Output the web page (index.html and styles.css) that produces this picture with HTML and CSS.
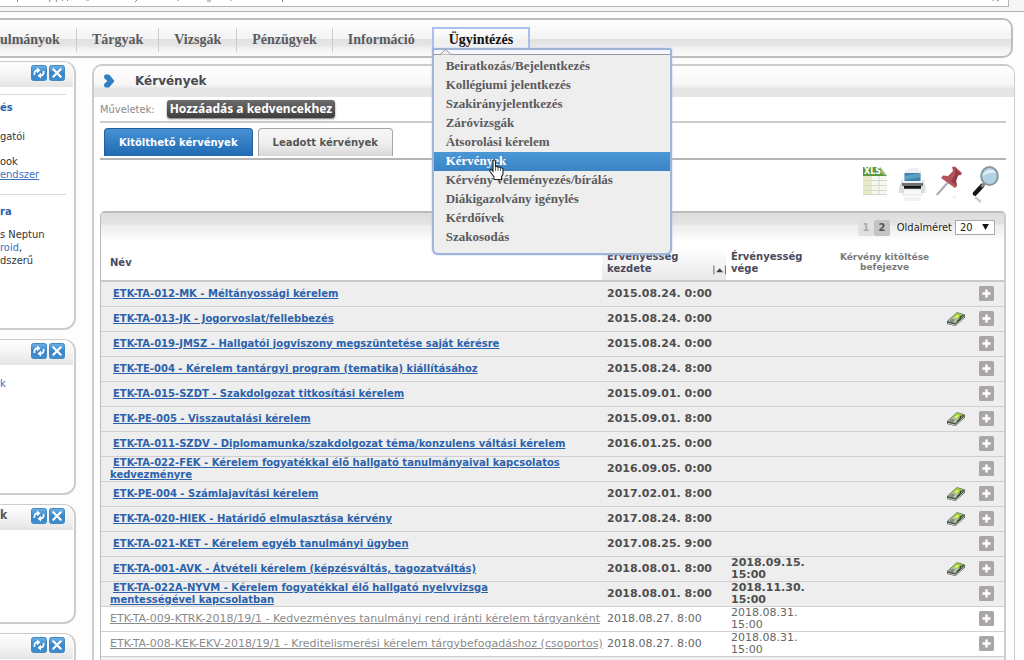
FILE: index.html
```html
<!DOCTYPE html>
<html lang="hu">
<head>
<meta charset="utf-8">
<title>Kérvények</title>
<link rel="stylesheet" href="styles.css">
</head>
<body>
<svg class="defs" aria-hidden="true">
  <defs>
    <linearGradient id="blue" x1="0" y1="0" x2="0" y2="1"><stop offset="0" stop-color="#6fb3e6"/><stop offset=".5" stop-color="#3786ca"/><stop offset="1" stop-color="#3f8ed0"/></linearGradient>
    <symbol id="i-refresh" viewBox="0 0 16 16"><rect x=".5" y=".5" width="15" height="15" rx="2" fill="url(#blue)" stroke="#4488c0"/><path d="M3.500 10C3 7.500 4 5.500 6.500 5.300M12.500 6c.5 2.500-.5 4.500-3 4.700" fill="none" stroke="#fff" stroke-width="1.900"/><path d="M6 2.500L9.500 5.300 6 8.500zM10 7.500L6.500 10.700 10 13.500z" fill="#fff"/></symbol>
    <symbol id="i-close" viewBox="0 0 16 16"><rect x=".5" y=".5" width="15" height="15" rx="2" fill="url(#blue)" stroke="#4488c0"/><path d="M4.300 4.300l7.400 7.400M11.700 4.300l-7.400 7.400" stroke="#fff" stroke-width="2.200" stroke-linecap="round"/></symbol>
    <symbol id="i-plus" viewBox="0 0 15 15"><rect width="15" height="15" rx="1.500" fill="#aaa6a8"/><path d="M7.500 3.500v8M3.500 7.500h8" stroke="#fff" stroke-width="2.400"/></symbol>
    <symbol id="i-money" viewBox="0 0 20 16"><path d="M1 11L11 2l8 2.500v2L9.500 15 1 13z" fill="#3c423c"/><path d="M1.500 12.300L9.500 14 18.500 5.800" stroke="#dfe3da" stroke-width=".9" fill="none"/><path d="M1 10.500L11 1.500l8 2.500-9.500 8.400z" fill="#b3bfa8" stroke="#4d564a" stroke-width=".7"/><path d="M6.500 6l4.500-4 5 1.500-4.500 4.500z" fill="#9fd02e"/><path d="M8.500 6l3-2 1.500 1-3 2z" fill="#f2f6a4"/><path d="M3 10.300l3-2.500 3 1-2.500 2.500z" fill="#7c8a76"/><path d="M11 10.800l3-2.800.5-2.500 3-1" stroke="#2f4a28" stroke-width="1.300" fill="none"/></symbol>
  </defs>
</svg>

<div class="browser-bar">
  <div class="address">
    <svg width="1000" height="4" viewBox="0 0 1000 4" aria-hidden="true"><path d="M17.500 0v2M50 0l-1 2M57 0l-1 2M63 0l-1 1M68 0l-1 1M86 0h3M137 0l-2 2M178 0v1M207 1h4M231 0v1M282.500 0v2M992 0h2M999 0l-2 1" stroke="#888" fill="none"/></svg>
  </div>
</div>

<nav class="main-nav">
  <a href="#" class="nav-item first">ulmányok</a>
  <a href="#" class="nav-item">Tárgyak</a>
  <a href="#" class="nav-item">Vizsgák</a>
  <a href="#" class="nav-item">Pénzügyek</a>
  <a href="#" class="nav-item last">Információ</a>
  <div class="nav-open">
    <a href="#" class="nav-item active">Ügyintézés</a>
    <div class="menu">
      <svg class="notch" width="12" height="6" viewBox="0 0 12 6" aria-hidden="true"><path d="M0 5.500L5.500.500 11 5.500" fill="#eee" stroke="#999"/></svg>
      <a href="#">Beiratkozás/Bejelentkezés</a>
      <a href="#">Kollégiumi jelentkezés</a>
      <a href="#">Szakirányjelentkezés</a>
      <a href="#">Záróvizsgák</a>
      <a href="#">Átsorolási kérelem</a>
      <a href="#" class="hover">Kérvények</a>
      <a href="#">Kérvény véleményezés/bírálás</a>
      <a href="#">Diákigazolvány igénylés</a>
      <a href="#">Kérdőívek</a>
      <a href="#">Szakosodás</a>
      <svg class="cursor" width="18" height="22" viewBox="0 0 18 22" aria-hidden="true"><path d="M5 1.500c1-1 2.500-.5 2.500 1V8c.5-1 2.300-.8 2.500.300 1-.8 2.200-.3 2.500.7 1-.5 2.500 0 2.500 1.500V15l-1.500 3v2.500H6V18l-4-5.500c-.8-1.500.8-2.500 2-1.300L5 12.300z" fill="#fff" stroke="#222" stroke-width="1.100"/><path d="M7.500 8v4M10 8.500V12M12.500 9.500V12" stroke="#444" stroke-width=".8"/></svg>
    </div>
  </div>
</nav>

<div class="columns">
  <aside class="sidebar">
    <section class="box box-news">
      <header class="box-head"><span></span>
        <button aria-label="Frissítés"><svg><use href="#i-refresh"/></svg></button><button aria-label="Bezárás"><svg><use href="#i-close"/></svg></button></header>
      <div class="news">
        <h3>és</h3>
        <p>gatói</p>
        <p>ook<br><a href="#" class="u">endszer</a></p>
      </div>
      <div class="news">
        <h3>ra</h3>
        <p>s Neptun<br><a href="#">roid</a>,<br>dszerű</p>
      </div>
    </section>
    <section class="box box-links">
      <header class="box-head"><span></span>
        <button aria-label="Frissítés"><svg><use href="#i-refresh"/></svg></button><button aria-label="Bezárás"><svg><use href="#i-close"/></svg></button></header>
      <p><a href="#">k</a></p>
    </section>
    <section class="box box-msgs">
      <header class="box-head"><span>k</span>
        <button aria-label="Frissítés"><svg><use href="#i-refresh"/></svg></button><button aria-label="Bezárás"><svg><use href="#i-close"/></svg></button></header>
    </section>
    <section class="box box-msgs">
      <header class="box-head"><span></span>
        <button aria-label="Frissítés"><svg><use href="#i-refresh"/></svg></button><button aria-label="Bezárás"><svg><use href="#i-close"/></svg></button></header>
    </section>
  </aside>

  <main class="panel">
    <header class="panel-head">
      <svg width="12" height="14" viewBox="0 0 12 14" aria-hidden="true"><path d="M2 1h4l5 6-5 6H2l-.5-3L5 7 1.500 4z" fill="#2f7fc0" stroke="#2f7fc0" stroke-linejoin="round"/></svg>
      <h1>Kérvények</h1>
    </header>
    <div class="panel-body">
      <div class="actions"><span>Műveletek:</span><button>Hozzáadás a kedvencekhez</button></div>
      <div class="tabs"><button class="tab on">Kitölthető kérvények</button><button class="tab">Leadott kérvények</button></div>
      <div class="tools">
        <button aria-label="Excel"><svg viewBox="0 0 28 38"><path d="M2 2h17l7 9v19H2z" fill="#f7f8f1"/><path d="M2 11h8v19H2z" fill="#e9e9c2"/><path d="M2 15.500h24M2 20.500h24M2 25.500h24M10 11v19M18 11v19M2 29.500h24" stroke="#d5dac6" fill="none"/><path d="M2 2h17l7 9H2z" fill="#5c9841"/><path d="M19 2l7 9-5-2z" fill="#9cc486"/><text x="3" y="9" class="xls">XLS</text></svg></button>
        <button aria-label="Nyomtatás"><svg viewBox="0 0 28 38"><path d="M7 5h3V3h11v3h2v12H6z" fill="#eef0f2"/><rect x="6.500" y="8" width="16" height="8" fill="#3b84ad"/><path d="M7 11l15-3v4l-15 3z" fill="#5aa1c6"/><path d="M3 16l2-2v4h19v-4l2 2 1.500 6v6H1v-6z" fill="#dcdfe1"/><path d="M4 18h21v3H4z" fill="#6c7174"/><rect x="6" y="21" width="17" height="3" fill="#141414"/><path d="M6 24h17l1 6H5z" fill="#f8f8f8" stroke="#ccc" stroke-width=".6"/><path d="M6 32h17l-1 4H7z" fill="#f1f1f1"/></svg></button>
        <button aria-label="Kitűzés"><svg viewBox="0 0 28 38"><path d="M12 18L1.500 30" stroke="#b8bfc6" stroke-width="2"/><path d="M13 18L3 29.500" stroke="#737c85" stroke-width=".7"/><path d="M17 2l3-.5 7 6.500-1 2-3 .5-2 5.500 1 5-2 2L6 13l2-2.500 5 .5 5-5z" fill="#b5535a"/><path d="M20 3l6 6-3 1.500-2 5.500 1 5-6-5 4-6z" fill="#923c44"/><path d="M17 32l3-2 1 4z" fill="#f8e8e8"/></svg></button>
        <button aria-label="Keresés"><svg viewBox="0 0 28 38"><path d="M10 21L3 28.500" stroke="#161616" stroke-width="4.500" stroke-linecap="round"/><path d="M12.500 18.500L9.500 22" stroke="#888" stroke-width="3"/><ellipse cx="17.500" cy="11" rx="8.300" ry="9" fill="#b4d2e3" stroke="#8798a3" stroke-width="2"/><path d="M10.500 11c1-6 11-9 13.500-3-5-1-9 0-13.500 3z" fill="#e2f1f8"/><path d="M3 32l6 5" stroke="#ccc" stroke-width="2.500"/></svg></button>
      </div>

      <div class="grid">
        <div class="pager">
          <button disabled>1</button><button class="cur">2</button>
          <label for="size">Oldalméret</label>
          <div class="select-wrap"><select id="size"><option>20</option></select><svg width="9" height="8" viewBox="0 0 9 8" aria-hidden="true"><path d="M0 0h9L4.500 8z" fill="#111"/></svg></div>
        </div>
        <table>
          <colgroup><col><col class="c-start"><col class="c-end"><col class="c-done"><col class="c-money"><col class="c-plus"></colgroup>
          <thead><tr>
            <th>Név</th>
            <th class="sorted"><div class="sort"><span>Érvényesség kezdete</span><svg width="15" height="10" viewBox="0 0 15 10" aria-hidden="true"><path d="M1 0v10M14 0v10" stroke="#555"/><path d="M3.500 7.500h8L7.500 3z" fill="#444"/></svg></div></th>
            <th>Érvényesség vége</th>
            <th class="done">Kérvény kitöltése befejezve</th><th></th><th></th>
          </tr></thead>
          <tbody id="rows"></tbody>
        </table>
      </div>
    </div>
  </main>
</div>
<script src="rows.js"></script>
</body>
</html>
```
FILE: rows.js
```js
const rows = [
  ["ETK-TA-012-MK - Méltányossági kérelem", "2015.08.24. 0:00", "", 0, 1],
  ["ETK-TA-013-JK - Jogorvoslat/fellebbezés", "2015.08.24. 0:00", "", 1, 1],
  ["ETK-TA-019-JMSZ - Hallgatói jogviszony megszüntetése saját kérésre", "2015.08.24. 0:00", "", 0, 1],
  ["ETK-TE-004 - Kérelem tantárgyi program (tematika) kiállításához", "2015.08.24. 8:00", "", 0, 1],
  ["ETK-TA-015-SZDT - Szakdolgozat titkosítási kérelem", "2015.09.01. 0:00", "", 0, 1],
  ["ETK-PE-005 - Visszautalási kérelem", "2015.09.01. 8:00", "", 1, 1],
  ["ETK-TA-011-SZDV - Diplomamunka/szakdolgozat téma/konzulens váltási kérelem", "2016.01.25. 0:00", "", 0, 1],
  ["ETK-TA-022-FEK - Kérelem fogyatékkal élő hallgató tanulmányaival kapcsolatos kedvezményre", "2016.09.05. 0:00", "", 0, 1],
  ["ETK-PE-004 - Számlajavítási kérelem", "2017.02.01. 8:00", "", 1, 1],
  ["ETK-TA-020-HIEK - Határidő elmulasztása kérvény", "2017.08.24. 8:00", "", 1, 1],
  ["ETK-TA-021-KET - Kérelem egyéb tanulmányi ügyben", "2017.08.25. 9:00", "", 0, 1],
  ["ETK-TA-001-AVK - Átvételi kérelem (képzésváltás, tagozatváltás)", "2018.08.01. 8:00", "2018.09.15. 15:00", 1, 1],
  ["ETK-TA-022A-NYVM - Kérelem fogyatékkal élő hallgató nyelvvizsga mentességével kapcsolatban", "2018.08.01. 8:00", "2018.11.30. 15:00", 0, 1],
  ["ETK-TA-009-KTRK-2018/19/1 - Kedvezményes tanulmányi rend iránti kérelem tárgyanként", "2018.08.27. 8:00", "2018.08.31. 15:00", 0, 0],
  ["ETK-TA-008-KEK-EKV-2018/19/1 - Kreditelismerési kérelem tárgybefogadáshoz (csoportos)", "2018.08.27. 8:00", "2018.08.31. 15:00", 0, 0]
];
document.getElementById("rows").innerHTML = rows.map(([name, start, end, money, open]) =>
  `<tr class="${open ? "open" : "closed"}"><td><a href="#">${name}</a></td><td>${start}</td><td>${end}</td><td></td>` +
  `<td class="ic">${money ? '<svg class="money" aria-hidden="true"><use href="#i-money"/></svg>' : ""}</td>` +
  `<td class="ic"><button aria-label="Lehetőségek"><svg class="plus"><use href="#i-plus"/></svg></button></td></tr>`).join("");
```
FILE: styles.css
```css
* { box-sizing: border-box; }
body { display: flex; flex-direction: column; height: 100vh; margin: 0; background: #fdfdfd; overflow: hidden; font-family: "DejaVu Sans", sans-serif; font-size: 10px; color: #333; }
button { border: 0; padding: 0; background: none; font: inherit; color: inherit; }
h1, h3, p { margin: 0; }
a { color: #3a6fc0; text-decoration: none; }
svg { display: block; }
.defs { position: absolute; width: 0; height: 0; }

.browser-bar { flex: none; height: 12px; background: #f6f6f6; border-bottom: 1px solid #b5b5b5; padding-right: 15px; }
.address { height: 7px; background: #fff; border: 1px solid #b5b5b5; border-width: 0 1px 1px 0; overflow: hidden; }

.main-nav { flex: none; display: flex; margin: 6px 11px 0 0; padding-top: 8px; height: 40px; border: 2px solid #bebebe; border-left: 0; border-radius: 0 10px 10px 0; background: linear-gradient(#fff 0, #f3f3f3 52%, #e1e1e1 54%, #e6e6e6 70%, #f3f3f3 80%, #fafafa); }
.nav-item { display: block; height: 24px; padding: 0 15px; line-height: 24px; border-right: 1px solid #ccc; font-family: "Liberation Serif", serif; font-size: 14px; font-weight: bold; color: #5a5a5c; white-space: nowrap; }
.nav-item.first { padding: 0 16px 0 0; }
.nav-item.last { border-right: 0; padding-right: 17px; }
.nav-open { position: relative; }
.nav-item.active { height: 22px; margin-top: -1px; border: 2px solid #a9c0ef; border-bottom: 0; color: #111; background: linear-gradient(#fff, #eee 70%, #f6f6f6); line-height: 22px; }
.menu { position: absolute; z-index: 5; left: 0; top: 20px; width: 240px; padding: 7px 0 6px; border: 2px solid #9fb4d6; border-radius: 0 3px 6px 6px; background: #eee; box-shadow: 0 0 2px #a9c0ef; }
.menu::before { content: ""; position: absolute; left: 0; right: 0; top: 0; height: 4px; border-bottom: 1px solid #999; background: #f4f7ff; }
.menu .notch { position: absolute; left: 6px; top: -1px; }
.menu a { display: block; height: 19px; padding-left: 12px; line-height: 18px; font-family: "Liberation Serif", serif; font-size: 13px; font-weight: bold; color: #5a5a5c; }
.menu a.hover { background: linear-gradient(#4b98d6, #3b84c4); color: #fff; }
.menu .cursor { position: absolute; left: 54px; top: 109px; }

.columns { flex: 1; min-height: 0; overflow: hidden; display: flex; gap: 16px; padding-right: 9px; }
.sidebar { flex: 0 0 76px; margin-top: 3px; display: flex; flex-direction: column; gap: 9px; font-family: "DejaVu Sans Condensed", "DejaVu Sans", sans-serif; font-size: 11px; line-height: 13px; }
.box { flex: none; border: 2px solid #ccc; border-left: 0; border-top-width: 1px; border-radius: 0 12px 12px 0; background: #fff; }
.box-head { display: flex; align-items: center; gap: 2px; height: 25px; padding: 0 8px 4px 0; margin-right: 1px; border-radius: 0 10px 0 0; background: linear-gradient(#fff, #f4f4f4 50%, #e4e4e4); }
.box-head span { flex: 1; font-weight: bold; font-size: 12px; color: #555; }
.box-head svg { width: 16px; height: 16px; }
.box-news { min-height: 269px; }
.box-links { min-height: 156px; }
.box-msgs { min-height: 120px; }
.box-links p { padding-top: 12px; }
.news { margin: 7px 8px 0 0; padding: 6px 0; border-top: 1px solid #d5dbe3; color: #333; }
.news + .news { padding-top: 10px; }
.news h3 { font-size: 11px; color: #2c5fae; margin-bottom: 16px; }
.news p { white-space: nowrap; }
.news p + p { margin-top: 12px; }
.news + .news h3 { margin-bottom: 10px; }
.u { text-decoration: underline; }

.panel { flex: 1; min-width: 0; margin-top: 6px; display: flex; flex-direction: column; border: 2px solid #ccc; border-right-width: 1px; border-bottom: 0; border-radius: 10px 10px 0 0; background: #fff; }
.panel-head { flex: none; display: flex; align-items: center; gap: 20px; height: 31px; padding: 0 0 2px 9px; border-radius: 10px 10px 0 0; background: linear-gradient(#fff, #f6f6f6 60%, #e5e5e5 75%, #e5e5e5); }
.panel-head h1 { font-size: 12px; color: #4a4a52; }
.panel-body { flex: 1; min-height: 0; display: flex; flex-direction: column; padding: 0 8px 0 6px; }
.actions { flex: none; display: flex; align-items: center; gap: 12px; height: 26px; border-bottom: 2px solid #ccc; font-family: "DejaVu Sans Condensed", "DejaVu Sans", sans-serif; font-size: 11px; color: #8a8a8a; }
.actions button { height: 18px; padding: 0 3px; border-radius: 3px; background: linear-gradient(#6c6c6c, #3e3e3e); box-shadow: 0 1px 2px #777; color: #fff; font-family: "Noto Sans", sans-serif; font-size: 12px; font-weight: bold; line-height: 18px; }
.tabs { flex: none; display: flex; gap: 5px; padding: 5px 4px 2px; border-bottom: 2px solid #b5b5b5; }
.tab { height: 28px; padding: 0 14px; border: 1px solid #a5a5a5; border-bottom: 0; border-radius: 4px 4px 0 0; background: linear-gradient(#f6f6f6, #f0f0f0 50%, #d8d8d8); font-weight: bold; color: #555; white-space: nowrap; }
.tab.on { border-color: #225f9c; background: linear-gradient(#4691d2, #2069b4); color: #fff; }
.tools { flex: none; display: flex; justify-content: flex-end; gap: 9px; padding: 5px 6px 8px; }
.tools svg { width: 28px; height: 38px; }
.xls { font: bold 8px "DejaVu Sans", sans-serif; fill: #fff; }

.grid { flex: 1; border: 1px solid #bbb; border-top: 2px solid #bbb; border-right: 2px solid #ccc; border-bottom: 0; border-radius: 5px 5px 0 0; background: #f2f2f2; }
.pager { display: flex; align-items: center; justify-content: flex-end; height: 28px; padding: 1px 9px 0 0; background: linear-gradient(#ddd, #e3e3e3 40%, #efefef 45%, #f3f3f3 70%, #fff); font-family: "DejaVu Sans Condensed", "DejaVu Sans", sans-serif; font-size: 11px; color: #222; }
.pager button { width: 16px; height: 16px; border-radius: 2px; background: #e0e0e0; font-weight: bold; color: #aaa; }
.pager button.cur { background: #c4c4c4; color: #555; }
.pager label { margin: 0 3px 0 7px; }
.select-wrap { position: relative; }
.select-wrap svg { position: absolute; right: 6px; top: 4px; width: 7px; height: 6px; }
.pager select { display: block; appearance: none; width: 40px; height: 15px; padding: 0 4px; border: 1px solid #aaa; border-radius: 0; background: #fff; font: inherit; line-height: 13px; color: #222; }

table { width: 100%; table-layout: fixed; border-collapse: collapse; line-height: 12px; }
.c-start { width: 124px; }
.c-end { width: 101px; }
.c-done { width: 115px; }
.c-money { width: 27px; }
.c-plus { width: 35px; }
th { height: 40px; padding: 6px 5px 2px; text-align: left; vertical-align: middle; color: #4b4a5e; border-bottom: 2px solid #c9c9c9; background: #fff; }
th:first-child { padding-left: 9px; }
th.sorted { background: linear-gradient(#fff 20%, #e8e8e8); padding-right: 0; }
.sort { display: flex; align-items: flex-end; justify-content: space-between; }
th.done { text-align: center; font-size: 9px; line-height: 10px; color: #7a7a7a; padding: 2px 10px 0; }
td { height: 25px; padding: 0 5px; border-bottom: 1px solid #cfcfcf; font-size: 11px; color: #4e4e4e; }
td:nth-child(1) { padding: 0 0 0 9px; }
td:nth-child(2) { padding-right: 0; white-space: nowrap; }
td:nth-child(3) { padding-right: 20px; }
td.ic { padding: 0; }
td.ic svg { margin: 0 auto; }
td.ic button { display: block; margin: 0 auto; }
td a { text-decoration: underline; }
.open td { background: #eee; font-weight: bold; }
.open td:nth-child(1) { padding-right: 28px; font-size: 10px; text-indent: 3px; }
.open a { color: #2b62ac; }
.closed td { background: #fff; color: #666; }
.closed td:nth-child(1) { white-space: nowrap; }
.closed a { color: #8a8a8a; }
.money { width: 20px; height: 16px; }
.plus { width: 15px; height: 15px; }
```
